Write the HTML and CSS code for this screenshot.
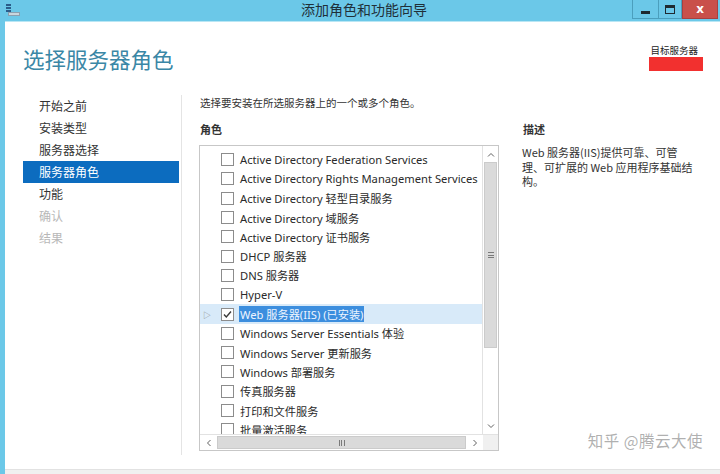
FILE: index.html
```html
<!DOCTYPE html>
<html lang="zh-CN">
<head>
    <meta charset="UTF-8">
    <title>添加角色和功能向导</title>
    <link rel="stylesheet" href="styles.css">
</head>
<body>
    <div class="window">
        <div class="titlebar">
            <svg class="app-icon" width="16" height="14" viewBox="0 0 16 14">
                <rect x="1" y="1" width="5" height="2" fill="#2a5d8a"/>
                <rect x="1" y="4" width="5" height="2" fill="#2a5d8a"/>
                <rect x="1" y="7" width="5" height="2" fill="#2a5d8a"/>
                <rect x="3" y="9" width="12" height="4" fill="#8aa0b0"/>
                <rect x="4" y="10" width="10" height="2" fill="#c9d6de"/>
            </svg>
            <div class="title">添加角色和功能向导</div>
            <div class="controls">
                <span class="btn min"><i></i></span>
                <span class="btn max"><i></i></span>
                <span class="btn close">x</span>
            </div>
        </div>

        <div class="frame">
            <div class="header">
                <h1>选择服务器角色</h1>
                <div class="target">
                    <div class="target-label">目标服务器</div>
                    <div class="redact"></div>
                </div>
            </div>

            <div class="main">
                <ul class="steps">
                    <li>开始之前</li>
                    <li>安装类型</li>
                    <li>服务器选择</li>
                    <li class="active">服务器角色</li>
                    <li>功能</li>
                    <li class="disabled">确认</li>
                    <li class="disabled">结果</li>
                </ul>

                <div class="content">
                    <p class="intro">选择要安装在所选服务器上的一个或多个角色。</p>
                    <div class="cols">
                        <div class="roles">
                            <h2>角色</h2>
                            <div class="listbox">
                                <div class="list-area">
                                    <div class="rows">
                                        <div class="row"><span class="cb"></span>Active Directory Federation Services</div>
                                        <div class="row"><span class="cb"></span>Active Directory Rights Management Services</div>
                                        <div class="row"><span class="cb"></span>Active Directory 轻型目录服务</div>
                                        <div class="row"><span class="cb"></span>Active Directory 域服务</div>
                                        <div class="row"><span class="cb"></span>Active Directory 证书服务</div>
                                        <div class="row"><span class="cb"></span>DHCP 服务器</div>
                                        <div class="row"><span class="cb"></span>DNS 服务器</div>
                                        <div class="row"><span class="cb"></span>Hyper-V</div>
                                        <div class="row selected">
                                            <span class="expander">▷</span>
                                            <span class="cb checked">
                                                <svg width="11" height="11" viewBox="0 0 11 11"><polyline points="2,5.5 4.3,8 9,2.5" fill="none" stroke="#3a3a3a" stroke-width="1.4"/></svg>
                                            </span>
                                            <span class="hl">Web 服务器(IIS) (已安装)</span>
                                        </div>
                                        <div class="row"><span class="cb"></span>Windows Server Essentials 体验</div>
                                        <div class="row"><span class="cb"></span>Windows Server 更新服务</div>
                                        <div class="row"><span class="cb"></span>Windows 部署服务</div>
                                        <div class="row"><span class="cb"></span>传真服务器</div>
                                        <div class="row"><span class="cb"></span>打印和文件服务</div>
                                        <div class="row"><span class="cb"></span>批量激活服务</div>
                                    </div>
                                    <div class="vscroll">
                                        <span class="arrow">
                                            <svg width="8" height="5" viewBox="0 0 8 5"><polyline points="1,4.5 4,1.5 7,4.5" fill="none" stroke="#606060" stroke-width="1"/></svg>
                                        </span>
                                        <div class="vthumb"><span class="grip-h"></span></div>
                                        <div class="track"></div>
                                        <span class="arrow">
                                            <svg width="8" height="5" viewBox="0 0 8 5"><polyline points="1,0.5 4,3.5 7,0.5" fill="none" stroke="#606060" stroke-width="1"/></svg>
                                        </span>
                                    </div>
                                </div>
                                <div class="hscroll">
                                    <span class="arrow">
                                        <svg width="5" height="8" viewBox="0 0 5 8"><polyline points="4.5,1 1.5,4 4.5,7" fill="none" stroke="#606060" stroke-width="1"/></svg>
                                    </span>
                                    <div class="hthumb"><span class="grip-v"></span></div>
                                    <span class="arrow">
                                        <svg width="5" height="8" viewBox="0 0 5 8"><polyline points="0.5,1 3.5,4 0.5,7" fill="none" stroke="#606060" stroke-width="1"/></svg>
                                    </span>
                                    <span class="corner"></span>
                                </div>
                            </div>
                        </div>

                        <div class="desc">
                            <h2>描述</h2>
                            <p>Web 服务器(IIS)提供可靠、可管理、可扩展的 Web 应用程序基础结构。</p>
                        </div>
                    </div>
                </div>
            </div>

            <div class="footer"></div>
        </div>
    </div>

    <div class="watermark">知乎 @腾云大使</div>
</body>
</html>
```

FILE: styles.css
```css
body {
    margin: 0;
    width: 720px;
    height: 474px;
    overflow: hidden;
    position: relative;
    background: #fff;
    font-family: "Noto Sans", "Noto Sans CJK SC", sans-serif;
    color: #2a2a2a;
}

.window {
    display: flex;
    flex-direction: column;
    height: 474px;
    background: #6bc8e8;
}

/* title bar */
.titlebar {
    height: 21px;
    display: grid;
    grid-template-columns: 1fr auto 1fr;
    align-items: start;
}

.app-icon {
    margin: 3px 0 0 5px;
}

.title {
    font-family: "Noto Sans CJK SC", sans-serif;
    font-size: 14px;
    line-height: 19px;
    color: #1f2f38;
    padding-left: 8px;
}

.controls {
    justify-self: end;
    display: flex;
    margin-right: 2px;
}

.btn {
    height: 19px;
    display: flex;
    align-items: center;
    justify-content: center;
    box-sizing: border-box;
    border: 1px solid #4b9fbd;
    border-top: none;
}

.btn.min {
    width: 26px;
    border-right: none;
}

.btn.min i {
    width: 9px;
    height: 3px;
    background: #1e2a30;
    margin-top: 6px;
}

.btn.max {
    width: 24px;
}

.btn.max i {
    width: 8px;
    height: 5px;
    border: 1px solid #1e2a30;
    border-top-width: 3px;
}

.btn.close {
    width: 36px;
    background: #c9504a;
    border-color: #a84040;
    color: #fff;
    font-family: "DejaVu Sans", sans-serif;
    font-weight: bold;
    font-size: 12px;
    line-height: 1;
}

/* frame */
.frame {
    flex: 1;
    margin-left: 5px;
    background: #fff;
    border-top: 1px solid #b9e6f4;
    display: flex;
    flex-direction: column;
}

.header {
    height: 73px;
    display: flex;
    justify-content: space-between;
    padding: 0 17px 0 18px;
}

.header h1 {
    margin: 24px 0 0;
    font-family: "Noto Sans CJK SC", sans-serif;
    font-weight: normal;
    font-size: 21.5px;
    line-height: 26px;
    color: #3a87a6;
}

.target {
    display: flex;
    flex-direction: column;
    align-items: flex-end;
    padding-top: 22px;
}

.target-label {
    font-family: "Noto Sans CJK SC", sans-serif;
    font-size: 9.5px;
    line-height: 12px;
    color: #222;
    margin-right: 5px;
}

.redact {
    width: 54px;
    height: 14px;
    margin-top: 1px;
    background: #f2302f;
}

.main {
    flex: 1;
    display: flex;
    padding-bottom: 14px;
}

/* steps */
.steps {
    list-style: none;
    margin: 0;
    padding: 0 2px 0 18px;
    width: 156px;
    border-right: 1px solid #e4e4e4;
    font-family: "Noto Sans CJK SC", sans-serif;
    font-size: 12px;
}

.steps li {
    height: 22px;
    line-height: 22px;
    padding-left: 16px;
    color: #333;
}

.steps li.active {
    background: #0c6cbf;
    color: #fff;
}

.steps li.disabled {
    color: #b8b8b8;
}

/* content */
.content {
    flex: 1;
    padding-left: 17px;
}

.intro {
    margin: 0 0 0 1px;
    font-family: "Noto Sans CJK SC", sans-serif;
    font-size: 10.5px;
    line-height: 15px;
    color: #333;
}

.cols {
    display: flex;
    gap: 23px;
    margin-top: 12px;
}

h2 {
    margin: 0 0 9px 1px;
    font-family: "Noto Sans CJK SC", sans-serif;
    font-size: 11px;
    line-height: 14px;
    font-weight: bold;
    color: #333;
}

.roles {
    width: 300px;
}

.listbox {
    height: 304px;
    border: 1px solid #c7c7c7;
    display: flex;
    flex-direction: column;
}

.list-area {
    flex: 1;
    display: flex;
    min-height: 0;
}

.rows {
    flex: 1;
    overflow: hidden;
    padding-top: 4px;
    font-size: 11.2px;
}

.row {
    height: 19.3px;
    display: flex;
    align-items: center;
    padding-left: 21px;
    white-space: nowrap;
    color: #2a2a2a;
    position: relative;
}

.cb {
    width: 11px;
    height: 11px;
    border: 1px solid #8c8c8c;
    background: #fff;
    margin-right: 6px;
    flex: none;
    display: flex;
}

.row.selected {
    background: #d8eaf9;
}

.expander {
    position: absolute;
    left: 3px;
    font-size: 8px;
    color: #888;
}

.hl {
    background: #3c8ede;
    color: #eef5ff;
    padding: 0 1px;
    margin-left: -1px;
}

/* scrollbars */
.vscroll {
    width: 16px;
    display: flex;
    flex-direction: column;
    background: #fff;
    border-left: 1px solid #e2e2e2;
    box-sizing: border-box;
}

.arrow {
    height: 16px;
    width: 16px;
    display: flex;
    align-items: center;
    justify-content: center;
    flex: none;
}

.vscroll .arrow {
    width: 15px;
}

.vthumb {
    height: 184px;
    margin: 0 1px;
    background: #dadada;
    border: 1px solid #cbcbcb;
    display: flex;
    align-items: center;
    justify-content: center;
}

.track {
    flex: 1;
}

.grip-h {
    width: 6px;
    height: 6px;
    background: repeating-linear-gradient(#7a7a7a 0 1px, transparent 1px 2.5px);
}

.hscroll {
    height: 15px;
    display: flex;
    border-top: 1px solid #e2e2e2;
}

.hscroll .arrow {
    height: 15px;
}

.hthumb {
    width: 249px;
    margin: 1px 1px;
    background: #dadada;
    border: 1px solid #cbcbcb;
    box-sizing: border-box;
    display: flex;
    align-items: center;
    justify-content: center;
}

.grip-v {
    width: 6px;
    height: 6px;
    background: repeating-linear-gradient(90deg, #7a7a7a 0 1px, transparent 1px 2.5px);
}

.corner {
    flex: 1;
    background: #f0f0f0;
}

/* description */
.desc {
    width: 176px;
}

.desc p {
    margin: 0;
    font-family: "Noto Sans CJK SC", sans-serif;
    font-size: 11px;
    line-height: 14.5px;
    color: #333;
}

.footer {
    height: 4px;
    background: #f0f0f0;
    border-top: 1px solid #e2e2e2;
}

.watermark {
    position: absolute;
    right: 17px;
    top: 429px;
    font-family: "Noto Sans CJK SC", sans-serif;
    font-size: 15.5px;
    color: rgba(150, 150, 150, 0.75);
    letter-spacing: 0.5px;
}
```
